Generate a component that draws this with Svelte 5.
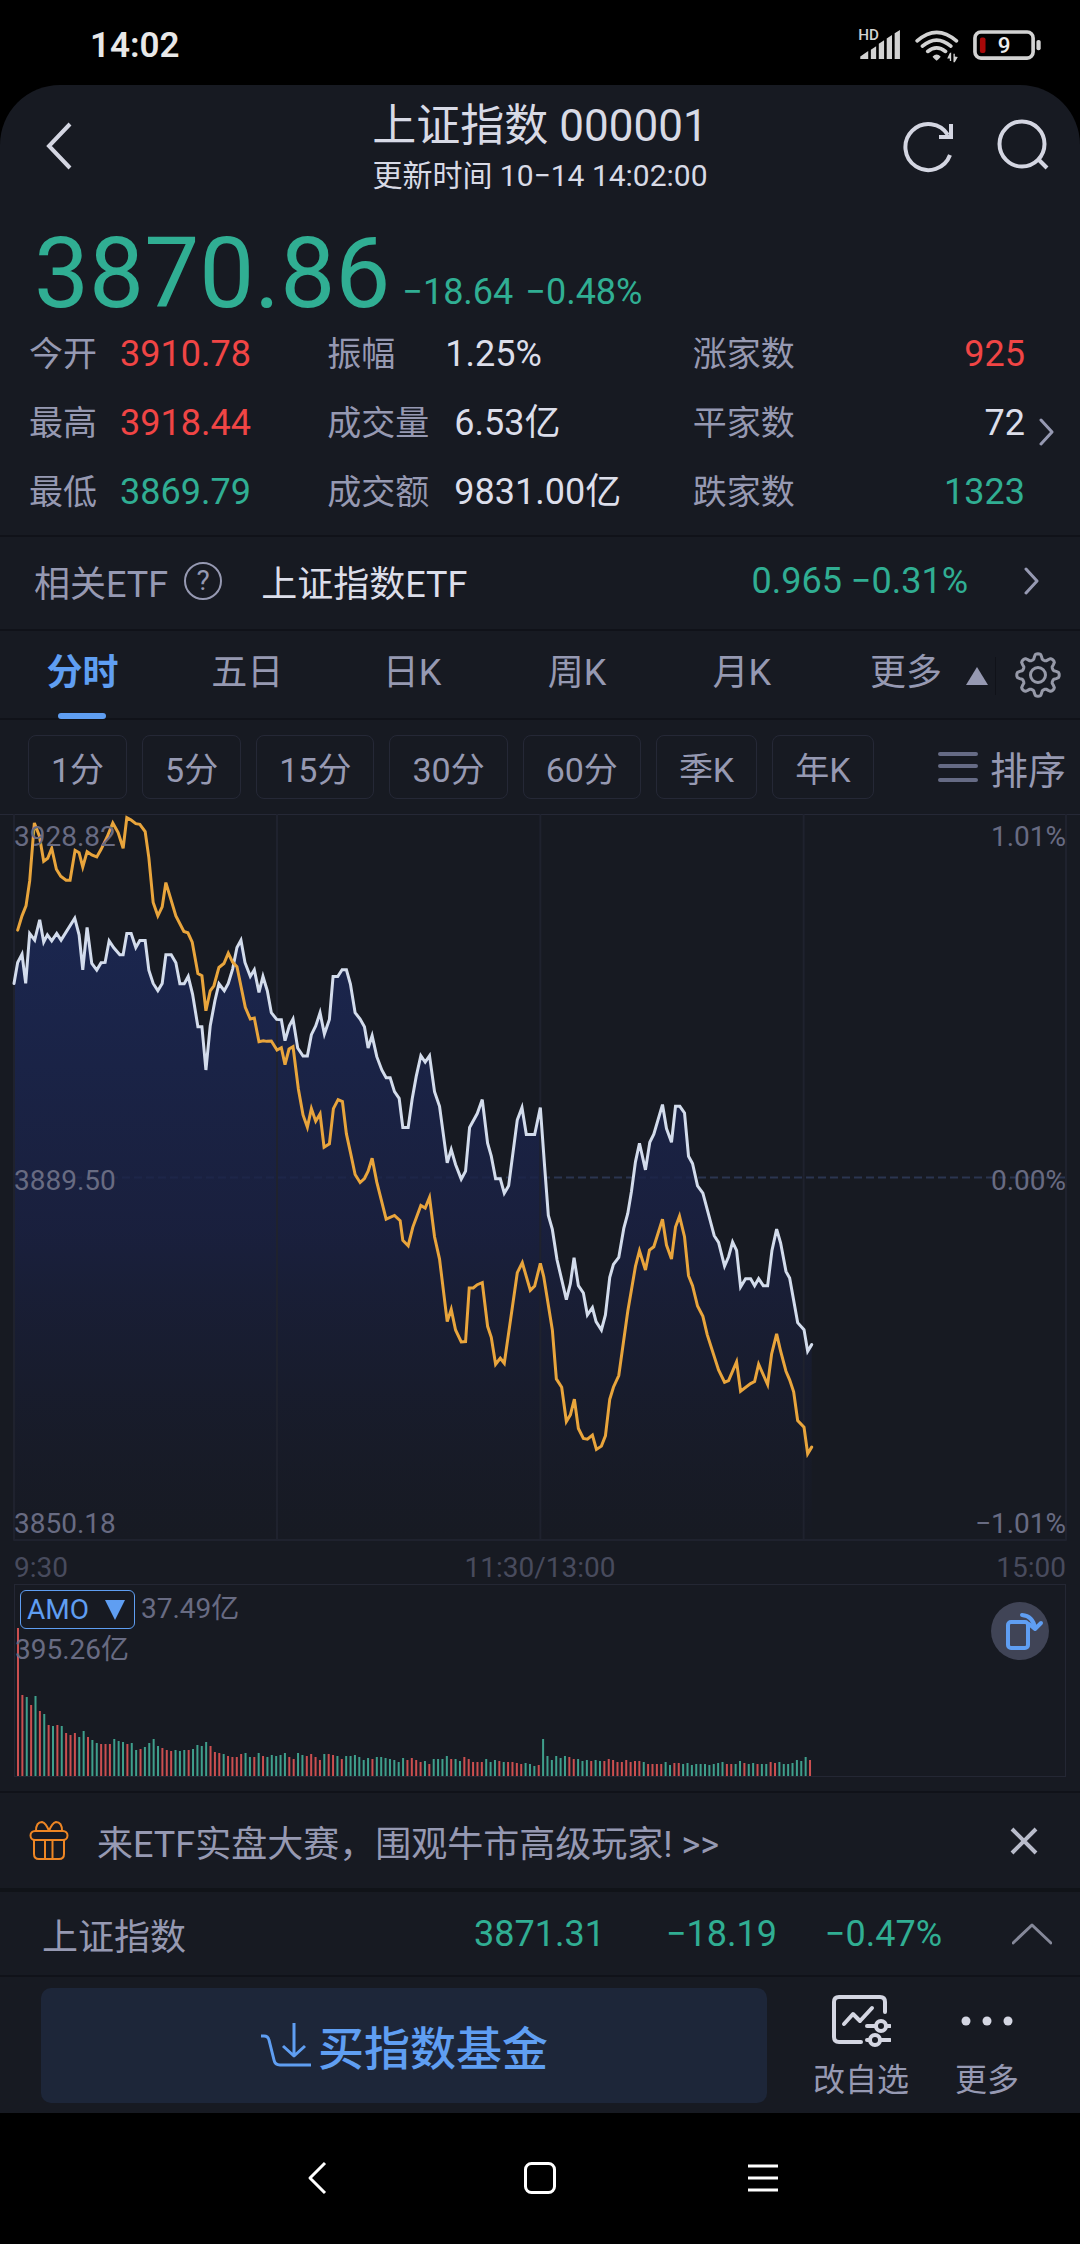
<script>
  const stats = [
    [
      { label: '今开', value: '3910.78', tone: 'up' },
      { label: '最高', value: '3918.44', tone: 'up' },
      { label: '最低', value: '3869.79', tone: 'down' }
    ],
    [
      { label: '振幅', value: '1.25%', tone: 'flat' },
      { label: '成交量', value: '6.53亿', tone: 'flat' },
      { label: '成交额', value: '9831.00亿', tone: 'flat' }
    ],
    [
      { label: '涨家数', value: '925', tone: 'up' },
      { label: '平家数', value: '72', tone: 'flat' },
      { label: '跌家数', value: '1323', tone: 'down' }
    ]
  ];

  const tabs = ['分时', '五日', '日K', '周K', '月K'];
  const periods = ['1分', '5分', '15分', '30分', '60分', '季K', '年K'];
  let activeTab = $state('分时');

  // Chart series. The early part is in chart units; the late part has its own origin and row scale.
  const indexEarly =
    '43,548 54,485 67,460 78,548 90,398 105,418 120,357 132,424 143,402 156,420 171,398 184,418 225,352 238,402 249,507 262,380 276,488 291,508 304,486 316,485 328,420 342,441 360,462 370,462 381,398 394,398 408,440 420,419 436,419 447,508 460,548 474,570 487,548 498,462 514,462 528,486 540,549 553,549 565,527 578,580 594,678 606,678 618,808 631,675 645,600 657,549 673,570 685,548 698,505 711,440 723,418 735,485 751,527 763,507 777,575 789,527 802,570 814,636 830,656 844,657 855,720 868,675 879,655 893,742 909,766 922,766 934,702 947,676 960,636 973,700 988,656 999,527 1013,527 1026,507 1039,507 1051,550 1065,636 1080,655 1093,678 1104,742 1116,705 1130,768 1145,808 1158,831 1170,831 1183,873 1197,893';
  const indexLate =
    '8,532 24,532 36,455 48,395 62,338 75,355 88,338 103,435 118,475 141,628 153,592 166,632 183,672 196,650 208,532 231,495 246,457 262,575 273,610 286,671 300,671 312,710 325,690 351,512 365,478 378,551 403,551 420,478 433,640 444,770 456,808 470,890 498,998 510,955 521,885 534,960 549,980 561,1040 576,1020 587,1058 603,1080 615,1040 628,938 639,903 655,884 670,805 682,765 693,705 705,625 717,575 735,647 748,572 760,550 786,470 798,535 813,572 825,475 838,475 852,493 864,610 876,630 891,690 907,710 941,825 954,843 972,907 984,882 996,842 1008,865 1020,964 1035,941 1050,941 1062,960 1074,941 1088,960 1101,960 1114,865 1128,807 1140,845 1156,922 1167,940 1191,1060 1210,1079 1221,1138 1233,1120';
  const leadEarly =
    '54,388 67,345 79,315 90,240 104,66 119,105 132,181 144,172 156,142 170,205 183,226 199,238 211,238 226,148 238,155 249,198 262,152 276,162 291,168 304,145 322,108 339,66 355,95 370,142 381,50 394,57 408,68 420,70 436,92 447,170 460,305 474,345 487,318 498,245 528,345 552,392 564,396 577,424 594,518 606,525 618,630 631,570 642,555 657,500 672,488 685,457 698,484 711,498 736,620 751,655 763,652 777,723 790,720 800,722 814,721 831,748 844,741 855,792 867,745 879,738 895,865 909,943 922,980 934,924 947,962 960,940 972,1040 988,1030 1000,924 1014,897 1027,903 1039,1000 1052,1060 1065,1122 1080,1146 1093,1134 1104,1112 1116,1073 1130,1145 1158,1256 1183,1245';
  const leadLate =
    '0,785 8,838 24,852 38,802 62,743 75,750 88,722 103,828 118,888 141,1058 153,1024 166,1080 183,1113 196,1112 207,967 219,967 231,958 246,952 262,1070 273,1100 286,1173 300,1157 312,1170 351,925 366,898 390,973 403,961 420,900 430,935 456,1080 468,1213 484,1235 498,1328 510,1310 522,1268 534,1347 549,1374 561,1376 576,1365 588,1404 603,1395 615,1367 628,1268 639,1235 655,1204 682,1030 705,908 717,866 735,918 747,864 760,855 786,780 798,850 813,888 825,802 837,772 852,828 864,933 876,960 891,1015 907,1043 920,1093 954,1188 972,1222 984,1217 1008,1167 1020,1246 1050,1225 1062,1220 1074,1173 1101,1228 1113,1145 1128,1091 1140,1138 1156,1192 1167,1215 1179,1248 1191,1325 1210,1343 1221,1415 1233,1397';

  function join(early, late) {
    const moved = late.split(' ').map((p) => {
      const [x, y] = p.split(',').map(Number);
      return `${x + 1200},${Math.round(y * 1.11 + 390)}`;
    });
    return early + ' ' + moved.join(' ');
  }

  const indexLine = join(indexEarly, indexLate);
  const leadLine = join(leadEarly, leadLate);
  const area = `43,2220 ${indexLine} 2433,2220`;

  // One turnover bar per minute: height and direction (r = rise, g = fall).
  const bars =
    '148r 81r 79g 71r 80g 65r 62g 51r 50g 51r 50g 43r 41r 43r 39g 45g 39r 36g 33g 32r 32r 32r 37g 35g 34g 32r 33g 26g 27r 29g 33g 37g 30g 28r 26r 25r 26g 25g 26g 26r 27g 31g 30g 34g 30r 24r 23r 22g 20r 19r 19r 22r 23g 19g 19r 23g 20r 19g 21g 20g 21g 23g 19r 17r 23g 21g 20r 22r 19r 16r 22g 22r 21r 20g 17r 20g 20g 21g 19g 16g 18g 17r 19g 19g 18g 17g 16g 14g 18g 16r 18r 16r 14r 15g 12r 17g 17g 17g 20g 17r 17g 15g 19r 17r 14r 14r 14r 17g 14g 16g 15r 14g 14r 14r 13r 12r 13g 12g 10g 11r 37g 20g 16g 20g 18g 20g 19r 17r 17g 15g 16g 15r 16g 15g 15r 17r 16r 14r 14r 16r 14r 15r 15r 14g 12r 12r 12r 12r 14g 11g 13r 13r 12g 13g 11g 12g 12g 12g 11g 12g 13g 14g 12r 12r 12g 15g 13r 12g 13g 12r 12g 12g 14r 13r 14g 12g 12g 13g 16g 15g 19g 16r'
      .split(' ')
      .map((b, i) => ({ x: 2 + i * 4.38, h: parseInt(b), up: b.endsWith('r') }));

  // Eight-lobed outline of the settings gear.
  const gear = Array.from({ length: 96 }, (_, i) => {
    const a = (i / 96) * Math.PI * 2;
    const r = 18.5 + 2.8 * Math.tanh(2 * Math.cos(8 * a));
    return `${(24 + r * Math.cos(a)).toFixed(2)},${(24 + r * Math.sin(a)).toFixed(2)}`;
  }).join(' ');
</script>

<div class="screen">
  <div class="status">
    <span>14:02</span>
    <svg class="status-icons" viewBox="50 35 560 115" aria-hidden="true">
      <g fill="#d2d2d2">
        <text x="51" y="75" font-size="46" font-weight="500">HD</text>
        <path d="M57 132V124L81 108V132ZM89 132V104L105 93V132ZM113 132V86L129 75V132ZM137 132V70L153 59V132ZM161 132V54L177 44V132Z" />
        <path d="M276 124Q288 112 300 124Q300 127 288 137Q276 127 276 124Z" />
        <path d="M328 114L332 112V138H328V130L320 130ZM339 142V116H343V124L352 126L343 142Z" />
      </g>
      <g class="strokes" stroke="#d2d2d2">
        <path d="M229 77Q288 25 348 77M245 93Q288 56 331 93M261 109Q288 88 315 109" />
        <rect x="404" y="50" width="176" height="79" rx="18" />
      </g>
      <rect x="590" y="74" width="13" height="31" rx="6" fill="#d2d2d2" />
      <rect x="419" y="67" width="17" height="47" rx="6" fill="#a80808" />
      <text x="492" y="115" font-size="68" font-weight="500" text-anchor="middle" fill="#ececec">9</text>
    </svg>
  </div>

  <main>
    <header>
      <button class="icon back" aria-label="返回">
        <svg width="30" height="50" viewBox="0 0 30 50"><path d="M26 3L5 25L26 47" /></svg>
      </button>
      <div class="title">
        <h1>上证指数 000001</h1>
        <p>更新时间 10−14 14:02:00</p>
      </div>
      <div class="tools">
        <button class="icon" aria-label="刷新">
          <svg width="52" height="54" viewBox="0 0 52 54">
            <path d="M45 16A23 23 0 1 0 47 36" /><path d="M48 5V18H36" />
          </svg>
        </button>
        <button class="icon" aria-label="搜索">
          <svg width="52" height="54" viewBox="0 0 52 54">
            <circle cx="25" cy="25" r="22.5" /><path d="M42 41L50 49" />
          </svg>
        </button>
      </div>
    </header>

    <section class="quote">
      <strong>3870.86</strong>
      <span>−18.64</span>
      <span>−0.48%</span>
    </section>

    <section class="stats">
      {#each stats as column, c}
        <dl class="col{c}">
          {#each column as s}
            <div><dt>{s.label}</dt><dd class={s.tone}>{s.value}</dd></div>
          {/each}
        </dl>
      {/each}
      <button class="more-stats" aria-label="更多行情">
        <svg class="arrow" width="16" height="28" viewBox="0 0 16 28"><path d="M2 2L13 14L2 26" /></svg>
      </button>
    </section>

    <section class="etf">
      <span>相关ETF</span>
      <button class="help" aria-label="说明">?</button>
      <a href="#etf">上证指数ETF</a>
      <span class="down etf-value">0.965 −0.31%</span>
      <svg class="arrow" width="16" height="28" viewBox="0 0 16 28"><path d="M2 2L13 14L2 26" /></svg>
    </section>

    <nav class="tabs">
      {#each tabs as t}
        <button class:active={t === activeTab} onclick={() => (activeTab = t)}>{t}</button>
      {/each}
      <button class="more">更多<i></i></button>
      <button class="gear" aria-label="设置">
        <svg width="48" height="48" viewBox="0 0 48 48">
          <polygon points={gear} /><circle cx="24" cy="24" r="7.5" />
        </svg>
      </button>
    </nav>

    <div class="periods">
      {#each periods as p}
        <button class="chip">{p}</button>
      {/each}
      <button class="sort">
        <svg width="40" height="32" viewBox="0 0 40 32"><path d="M2 3H38M2 15H38M2 29H38" /></svg>排序
      </button>
    </div>

    <section class="chart">
      <svg viewBox="43 42 3152 2178" preserveAspectRatio="none" role="img" aria-label="分时走势">
        <defs>
          <linearGradient id="fill" gradientUnits="userSpaceOnUse" x1="0" y1="352" x2="0" y2="2220">
            <stop offset="0" stop-color="#1b2855" stop-opacity="0.88" />
            <stop offset="0.5" stop-color="#1a2144" stop-opacity="0.8" />
            <stop offset="1" stop-color="#171a24" stop-opacity="0.4" />
          </linearGradient>
        </defs>
        <path class="mid" d="M43 1131H3195" />
        <polygon points={area} fill="url(#fill)" />
        <path class="grid" d="M43 42V2220M831 42V2220M1620 42V2220M2409 42V2220M3195 42V2220M43 2220H3195" />
        <polyline class="index" points={indexLine} />
        <polyline class="lead" points={leadLine} />
      </svg>
      <div class="axis"><span>3928.82</span><span>3889.50</span><span>3850.18</span></div>
      <div class="axis right"><span>1.01%</span><span>0.00%</span><span>−1.01%</span></div>
    </section>

    <div class="times"><span>9:30</span><span>11:30/13:00</span><span>15:00</span></div>

    <section class="volume">
      <svg class="bars" viewBox="0 0 1051 150" preserveAspectRatio="none" role="img" aria-label="成交额">
        {#each bars as b}
          <rect x={b.x} y={150 - b.h} width="2" height={b.h} fill={b.up ? '#cb4f50' : '#3f9f8c'} />
        {/each}
      </svg>
      <div class="indicator">
        <button>AMO<i></i></button>
        <span>37.49亿</span>
      </div>
      <span class="peak">395.26亿</span>
      <button class="rotate" aria-label="横屏">
        <svg width="58" height="58" viewBox="0 0 58 58">
          <rect x="17" y="20" width="20" height="26" rx="3" />
          <path d="M31 13Q42 14 44 26M38 22L44 27L50 21" />
        </svg>
      </button>
    </section>

    <aside class="banner">
      <svg width="40" height="42" viewBox="0 0 40 42" aria-hidden="true">
        <rect x="1.500" y="11" width="37" height="9" rx="4.500" />
        <path d="M5 20V34Q5 39 10 39H30Q35 39 35 34V20M16 20V39M23.500 20V39" />
        <path d="M7 11Q7 2 13 2Q17 3 20 11Q23 3 27 2Q33 2 33 11" />
      </svg>
      <a href="#contest">来ETF实盘大赛，围观牛市高级玩家! &gt;&gt;</a>
      <button aria-label="关闭">
        <svg width="30" height="30" viewBox="0 0 30 30"><path d="M3 3L27 27M27 3L3 27" /></svg>
      </button>
    </aside>

    <section class="ticker">
      <span>上证指数</span>
      <span class="down price">3871.31</span>
      <span class="down change">−18.19</span>
      <span class="down percent">−0.47%</span>
      <button aria-label="展开">
        <svg width="40" height="24" viewBox="0 0 40 24"><path d="M1 21L20 3L39 21" /></svg>
      </button>
    </section>

    <footer>
      <button class="buy">
        <svg width="52" height="48" viewBox="0 0 52 48">
          <path d="M1 15H4Q8 15 9 19L14 39Q15 44 20 44H51M34 2V35M23 25L34 35L45 25" />
        </svg>买指数基金
      </button>
      <button class="action">
        <svg width="60" height="54" viewBox="0 0 60 54">
          <path d="M54 18V8Q54 3 49 3H8Q3 3 3 8V43Q3 48 8 48H30" />
          <path d="M13 30L22 20L29 27L41 14" />
          <path d="M36 32H44M56 32H59M36 46H38M50 46H59" />
          <circle cx="50" cy="32" r="5" /><circle cx="44" cy="46" r="5" />
        </svg>改自选
      </button>
      <button class="action dots">
        <svg width="60" height="54" viewBox="0 0 60 54">
          <circle cx="9" cy="27" r="4.500" /><circle cx="30" cy="27" r="4.500" /><circle cx="51" cy="27" r="4.500" />
        </svg>更多
      </button>
    </footer>
  </main>

  <div class="system">
    <button aria-label="系统返回"><svg width="36" height="36" viewBox="0 0 36 36"><path d="M26 3L11 18L26 33" /></svg></button>
    <button aria-label="主屏幕"><svg width="36" height="36" viewBox="0 0 36 36"><rect x="3.500" y="3.500" width="29" height="29" rx="6" /></svg></button>
    <button aria-label="最近任务"><svg width="36" height="36" viewBox="0 0 36 36"><path d="M3 6H33M3 18H33M3 30H33" /></svg></button>
  </div>
</div>

<style>
  :global(body) {
    background: #000;
  }
  .screen {
    font-family: Roboto, 'Noto Sans CJK SC', sans-serif;
    font-size: 36px;
    color: #9699b2;
    background: #000;
  }
  button {
    font: inherit;
    color: inherit;
    background: none;
    border: 0;
    padding: 0;
    cursor: pointer;
  }
  a {
    color: inherit;
    text-decoration: none;
  }
  h1, p, dl, dd {
    margin: 0;
    font-weight: 400;
  }
  svg {
    display: block;
    fill: none;
    stroke-linecap: round;
    stroke-linejoin: round;
  }
  .up { color: #f04545; }
  .down { color: #30ae93; }
  .flat { color: #dcdeea; }

  .status {
    display: flex;
    align-items: center;
    justify-content: space-between;
    height: 85px;
    padding: 6px 36px 0 90px;
    box-sizing: border-box;
    color: #e8e8e8;
    font-size: 35px;
    font-weight: 600;
  }
  .status-icons {
    width: 187px;
    height: 38px;
  }
  .strokes {
    stroke-width: 11;
  }

  main {
    background: #171a22;
    border-radius: 60px 60px 0 0;
    padding-top: 15px;
  }
  header {
    display: grid;
    grid-template-columns: 1fr auto 1fr;
    align-items: start;
    height: 128px;
    color: #d8dae6;
  }
  .icon {
    display: flex;
    align-items: center;
    height: 92px;
  }
  .icon svg {
    stroke: #d4d6e2;
    stroke-width: 4;
    stroke-linecap: butt;
    stroke-linejoin: miter;
  }
  .back {
    margin-left: 44px;
  }
  .title {
    text-align: center;
  }
  h1 {
    font-size: 44px;
    line-height: 52px;
  }
  .title p {
    font-size: 30px;
    line-height: 48px;
  }
  .tools {
    display: flex;
    justify-content: flex-end;
    gap: 42px;
    padding-right: 31px;
  }

  .quote {
    display: flex;
    align-items: flex-end;
    gap: 12px;
    padding-left: 34px;
    color: #30ae93;
    line-height: 56px;
  }
  .quote strong {
    font-size: 98px;
    font-weight: 400;
    line-height: 92px;
  }

  .stats {
    position: relative;
    display: flex;
    padding: 0 55px 8px 29px;
    border-bottom: 2px solid #101219;
  }
  .stats div {
    display: flex;
    height: 69px;
    line-height: 69px;
    white-space: nowrap;
  }
  .stats dt { font-size: 34px; }
  .col0 { flex: 298; }
  .col1 { flex: 365; }
  .col2 { flex: 332; }
  .col0 dt { width: 91px; }
  .col1 dt { min-width: 93px; margin-right: 25px; }
  .col2 div { justify-content: space-between; }
  .more-stats {
    position: absolute;
    right: 25px;
    top: 98px;
  }
  .arrow {
    stroke: #9699b2;
    stroke-width: 3;
  }

  .etf {
    display: flex;
    align-items: center;
    height: 88px;
    padding: 0 40px 4px 34px;
    border-bottom: 2px solid #101219;
  }
  .help {
    width: 38px;
    height: 38px;
    margin: 0 39px 0 16px;
    border: 2px solid #9699b2;
    border-radius: 50%;
    font-size: 28px;
    line-height: 34px;
  }
  .etf a {
    color: #dcdeea;
  }
  .etf-value {
    margin: 0 56px 0 auto;
  }

  .tabs {
    display: flex;
    height: 87px;
    border-bottom: 2px solid #101219;
    line-height: 84px;
  }
  .tabs button {
    position: relative;
    flex: 165;
    display: flex;
    justify-content: center;
    height: 84px;
  }
  .tabs .active {
    color: #5f9ef2;
    font-weight: 700;
  }
  .tabs .active::after {
    content: '';
    position: absolute;
    bottom: -4px;
    width: 48px;
    height: 6px;
    border-radius: 3px;
    background: #5f9ef2;
  }
  .tabs .more {
    flex: 164;
    align-items: center;
    justify-content: flex-end;
    gap: 24px;
    padding-right: 7px;
    box-sizing: border-box;
  }
  .more i {
    border: 11px solid transparent;
    border-top: 0;
    border-bottom: 18px solid #9699b2;
    margin-top: 6px;
  }
  .tabs .gear {
    flex: 85;
    align-items: center;
  }
  .gear svg {
    stroke: #9699a8;
    stroke-width: 3;
    margin-top: 4px;
  }
  .gear::before {
    content: '';
    position: absolute;
    left: 0;
    top: 26px;
    height: 38px;
    border-left: 1px solid #101219;
  }

  .periods {
    display: flex;
    align-items: center;
    gap: 15px;
    height: 94px;
    padding: 0 14px 0 28px;
    border-bottom: 1px solid #252836;
  }
  .chip {
    height: 64px;
    padding: 0 22px;
    border: 1px solid #252836;
    border-radius: 8px;
    font-size: 34px;
    white-space: nowrap;
  }
  .sort {
    display: flex;
    align-items: center;
    gap: 12px;
    margin-left: auto;
    font-size: 38px;
    white-space: nowrap;
  }
  .sort svg {
    stroke: #666b85;
    stroke-width: 4;
  }

  .chart {
    position: relative;
    margin: 0 14px;
    font-size: 28px;
    color: #686b82;
  }
  .chart svg {
    width: 100%;
    height: 725px;
    overflow: visible;
  }
  .chart path,
  .chart polyline {
    vector-effect: non-scaling-stroke;
  }
  .grid { stroke: #1f222e; stroke-width: 2; }
  .mid { stroke: #2b3550; stroke-width: 2; stroke-dasharray: 8 4; stroke-linecap: butt; }
  .index { stroke: #d3dcec; stroke-width: 3; stroke-linejoin: miter; }
  .lead { stroke: #e9a53c; stroke-width: 3; stroke-linejoin: miter; }
  .axis {
    position: absolute;
    inset: 0 auto 0 0;
    display: flex;
    flex-direction: column;
    justify-content: space-between;
    line-height: 32px;
    padding: 6px 0 0;
  }
  .axis.right {
    inset: 0 0 0 auto;
    text-align: right;
  }

  .times {
    display: grid;
    grid-template-columns: 1fr auto 1fr;
    margin: 0 14px;
    padding-top: 6px;
    height: 38px;
    font-size: 28px;
    line-height: 44px;
    color: #484b5d;
  }
  .times span:last-child {
    text-align: right;
  }
  .times, .indicator, .peak { white-space: nowrap; }

  .volume {
    position: relative;
    height: 186px;
    margin: 0 14px 14px;
    padding-top: 5px;
    border: 1px solid #242734;
    font-size: 28px;
    color: #686b82;
  }
  .bars {
    position: absolute;
    left: 0;
    bottom: 0;
    width: 100%;
    height: 150px;
  }
  .indicator {
    position: relative;
    display: flex;
    gap: 6px;
    line-height: 38px;
  }
  .indicator button {
    display: flex;
    align-items: center;
    gap: 16px;
    height: 39px;
    margin-left: 5px;
    padding: 0 9px 0 6px;
    border: 1px solid #5f9ef2;
    border-radius: 6px;
    color: #5f9ef2;
    background: #171a22;
  }
  .indicator i {
    border: 10px solid transparent;
    border-bottom: 0;
    border-top: 20px solid #5f9ef2;
  }
  .peak {
    position: relative;
    display: block;
    line-height: 42px;
  }
  .rotate {
    position: absolute;
    top: 17px;
    right: 16px;
    border-radius: 50%;
    background: #404456;
  }
  .rotate svg {
    stroke: #5f9ef2;
    stroke-width: 4;
  }

  .banner {
    display: flex;
    align-items: center;
    height: 95px;
    padding: 0 41px 0 29px;
    border-top: 2px solid #101219;
    border-bottom: 4px solid #101318;
  }
  .banner > svg {
    stroke: #ee8624;
    stroke-width: 2;
    margin-right: 28px;
  }
  .banner a {
    flex: 1;
    white-space: nowrap;
  }
  .banner button svg {
    stroke: #b9bccb;
    stroke-width: 4;
    stroke-linecap: butt;
  }

  .ticker {
    display: flex;
    align-items: center;
    height: 83px;
    padding: 0 28px 0 42px;
    border-bottom: 2px solid #101219;
  }
  .price { margin-left: auto; }
  .change { width: 172px; text-align: right; }
  .percent { width: 165px; margin-right: 70px; text-align: right; }
  .ticker svg {
    stroke: #858899;
    stroke-width: 3;
  }

  footer {
    display: flex;
    align-items: center;
    height: 136px;
    padding: 0 61px 0 41px;
  }
  .buy {
    flex: 1;
    display: flex;
    align-items: center;
    justify-content: center;
    gap: 6px;
    height: 115px;
    border-radius: 10px;
    background: #1d2639;
    color: #5f9ef2;
    font-size: 46px;
    font-weight: 500;
  }
  .buy svg {
    stroke: #5f9ef2;
    stroke-width: 3;
    stroke-linecap: butt;
  }
  .action {
    display: flex;
    flex-direction: column;
    align-items: center;
    gap: 16px;
    margin-left: 46px;
    font-size: 32px;
    line-height: 32px;
  }
  .action svg {
    stroke: #d4d6e2;
    stroke-width: 4;
  }
  .action.dots svg {
    fill: #d4d6e2;
    stroke: none;
  }

  .system {
    display: flex;
    height: 130px;
    padding: 0 19%;
  }
  .system button {
    flex: 1;
    display: flex;
    align-items: center;
    justify-content: center;
  }
  .system svg {
    stroke: #fff;
    stroke-width: 3;
    stroke-linecap: butt;
  }
</style>
